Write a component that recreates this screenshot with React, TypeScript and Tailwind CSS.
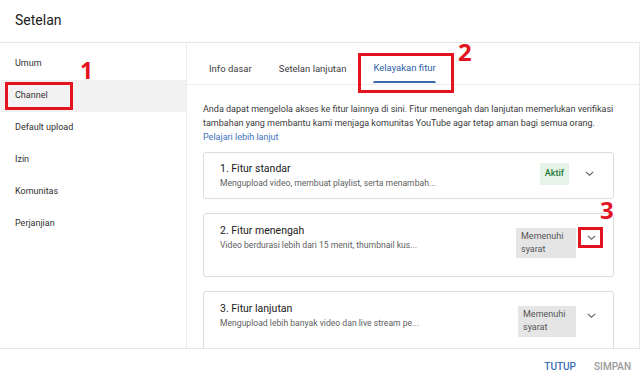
import React from "react";

function Chevron({ className = "" }: { className?: string }) {
  return (
    <svg width="9" height="5" viewBox="0 0 9 5" className={className}>
      <path d="M0.8 0.8 L4.5 4.2 L8.2 0.8" fill="none" stroke="#606060" strokeWidth="1.1" />
    </svg>
  );
}

export default function App() {
  const side = ["Umum", "Channel", "Default upload", "Izin", "Komunitas", "Perjanjian"];
  return (
    <div
      className="relative w-[640px] h-[380px] bg-white overflow-hidden text-[#202020]"
      style={{ fontFamily: "Roboto, 'Liberation Sans', sans-serif" }}
    >
      {/* header */}
      <div className="h-[43px] border-b border-[#e6e6e6] flex items-center pl-[15px] text-[14px] pb-[2px]">
        Setelan
      </div>
      {/* body */}
      <div className="flex h-[305px]">
        <div className="w-[187px] border-r border-[#ebebeb] pt-[5px] shrink-0">
          {side.map((s) => (
            <div
              key={s}
              className={`h-[32px] flex items-center pl-[15px] text-[9px] text-[#303030] ${
                s === "Channel" ? "bg-[#f2f2f2]" : ""
              }`}
            >
              {s}
            </div>
          ))}
        </div>
        <div className="flex-1 flex flex-col border-r border-[#e8e8e8] overflow-hidden">
          {/* tabs */}
          <div className="h-[42px] border-b border-[#ececec] flex items-end pl-[22px] gap-[27px] text-[9.5px] shrink-0">
            <div className="pb-[9px] text-[#404040] leading-[12px]">Info dasar</div>
            <div className="pb-[9px] text-[#404040] leading-[12px]">Setelan lanjutan</div>
            <div className="leading-[12px] text-[#2f5fa8] flex flex-col">
              <span className="pb-[7px]">Kelayakan fitur</span>
              <span className="h-[2px] bg-[#3b68ad] rounded-t-sm mb-[1px]" />
            </div>
          </div>
          {/* content */}
          <div className="pl-[16px] pr-[25px] pt-[17px] overflow-hidden">
            <div className="text-[9px] leading-[14px] text-[#3a3a3a] whitespace-nowrap">
              <div>
                Anda dapat mengelola akses ke fitur lainnya di sini. Fitur menengah dan lanjutan memerlukan verifikasi
              </div>
              <div>tambahan yang membantu kami menjaga komunitas YouTube agar tetap aman bagi semua orang.</div>
              <div className="text-[#3d72c0]">Pelajari lebih lanjut</div>
            </div>
            {/* card 1 */}
            <div className="mt-[8px] h-[47px] border border-[#dcdcdc] rounded-[3px] flex pl-[16px] pr-[12px] pt-[9px]">
              <div className="flex-1">
                <div className="text-[10.5px] leading-[13px] text-[#202020]">1. Fitur standar</div>
                <div className="text-[8.6px] leading-[12px] mt-[2px] text-[#606060]">
                  Mengupload video, membuat playlist, serta menambah...
                </div>
              </div>
              <div className="mt-[1px] h-[22px] px-[5px] bg-[#e6f3e8] text-[#1f7a36] text-[9px] font-medium flex items-center">
                Aktif
              </div>
              <div className="w-[24px] ml-[8px] h-[22px] flex items-center justify-center">
                <Chevron />
              </div>
            </div>
            {/* card 2 */}
            <div className="mt-[14px] h-[64px] border border-[#dcdcdc] rounded-[3px] flex pl-[16px] pr-[10px] pt-[10px]">
              <div className="flex-1">
                <div className="text-[10.5px] leading-[13px] text-[#202020]">2. Fitur menengah</div>
                <div className="text-[8.6px] leading-[12px] mt-[2px] text-[#606060]">
                  Video berdurasi lebih dari 15 menit, thumbnail kus...
                </div>
              </div>
              <div className="mt-[4px] h-[30px] w-[60px] pl-[5px] pt-[2px] bg-[#e5e5e5] text-[#555] text-[9px] leading-[13px]">
                Memenuhi syarat
              </div>
              <div className="w-[24px] ml-[3px] mt-[4px] h-[18px] flex items-center justify-center">
                <Chevron />
              </div>
            </div>
            {/* card 3 */}
            <div className="mt-[14px] h-[70px] border border-[#dcdcdc] rounded-[3px] flex pl-[16px] pr-[10px] pt-[10px]">
              <div className="flex-1">
                <div className="text-[10.5px] leading-[13px] text-[#202020]">3. Fitur lanjutan</div>
                <div className="text-[8.6px] leading-[12px] mt-[2px] text-[#606060]">
                  Mengupload lebih banyak video dan live stream pe...
                </div>
              </div>
              <div className="mt-[4px] h-[31px] w-[58px] pl-[5px] pt-[2px] bg-[#e5e5e5] text-[#555] text-[9px] leading-[13px]">
                Memenuhi syarat
              </div>
              <div className="w-[24px] ml-[3px] mt-[4px] h-[18px] flex items-center justify-center">
                <Chevron />
              </div>
            </div>
          </div>
        </div>
      </div>
      {/* footer */}
      <div className="h-[32px] border-t border-[#e6e6e6] flex items-center justify-end pr-[9px] gap-[18px] text-[10px] font-medium pt-[4px]">
        <span className="text-[#3a6db3]">TUTUP</span>
        <span className="text-[#9a9a9a]">SIMPAN</span>
      </div>

      {/* red annotations */}
      <div className="absolute left-[5px] top-[82px] w-[68px] h-[28px] border-[3px] border-[#e3141f]" />
      <div className="absolute left-[80px] top-[59px] text-[23px] font-bold leading-none text-[#e3141f]" style={{ fontFamily: "'Open Sans', sans-serif" }}>
        1
      </div>
      <div className="absolute left-[358px] top-[53px] w-[96px] h-[40px] border-[3px] border-[#e3141f]" />
      <div className="absolute left-[458px] top-[40px] text-[24px] font-bold leading-none text-[#e3141f]" style={{ fontFamily: "'Open Sans', sans-serif" }}>
        2
      </div>
      <div className="absolute left-[578px] top-[227px] w-[25px] h-[21px] border-[3px] border-[#e3141f]" />
      <div className="absolute left-[600px] top-[198px] text-[24px] font-bold leading-none text-[#e3141f]" style={{ fontFamily: "'Open Sans', sans-serif" }}>
        3
      </div>
    </div>
  );
}
